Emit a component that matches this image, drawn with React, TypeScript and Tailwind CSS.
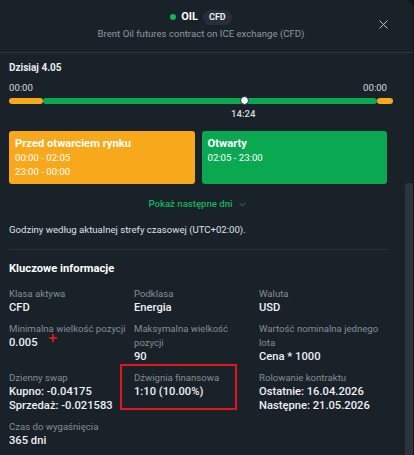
import { X, ChevronDown } from "lucide-react";

const info = [
  { label: "Klasa aktywa", value: ["CFD"] },
  { label: "Podklasa", value: ["Energia"] },
  { label: "Waluta", value: ["USD"] },
  { label: "Minimalna wielkość pozycji", value: ["0.005"], cursor: true },
  { label: "Maksymalna wielkość pozycji", value: ["90"] },
  { label: "Wartość nominalna jednego lota", value: ["Cena * 1000"] },
  { label: "Dzienny swap", value: ["Kupno: -0.04175", "Sprzedaż: -0.021583"] },
  { label: "Dźwignia finansowa", value: ["1:10 (10.00%)"], marked: true },
  { label: "Rolowanie kontraktu", value: ["Ostatnie: 16.04.2026", "Następne: 21.05.2026"] },
  { label: "Czas do wygaśnięcia", value: ["365 dni"] },
];

export default function App() {
  return (
    <div className="w-[414px] h-[455px] overflow-hidden bg-[#11161a] font-['Roboto',sans-serif] text-[#e8ebee]">
      <div className="w-[413px] h-full bg-[#1a2229] rounded-tr-[9px] flex flex-col">
        {/* header */}
        <header className="relative h-[53px] shrink-0 border-b border-[#2a333b] flex flex-col items-center pt-[9px] pr-[11px]">
          <div className="flex items-center h-[16px]">
            <span className="w-[6px] h-[6px] rounded-full bg-[#12b55c]" />
            <span className="ml-[5px] text-[11px] font-bold leading-[16px] text-white">OIL</span>
            <span className="ml-[5px] px-[6px] h-[15px] rounded-full bg-[#262f37] text-[9px] font-bold leading-[15px] text-[#e8ebee]">CFD</span>
          </div>
          <p className="mt-[2px] text-[9.6px] leading-[14px] text-[#8d97a1]">Brent Oil futures contract on ICE exchange (CFD)</p>
          <button className="absolute left-[376px] top-[17px] text-[#c9ced3]">
            <X size={15} strokeWidth={1.5} />
          </button>
        </header>

        <div className="flex flex-1 min-h-0">
          <main className="w-[405px] px-[9px] pt-[8px]">
            <h3 className="text-[10px] font-bold leading-[14px]">Dzisiaj 4.05</h3>

            {/* day timeline */}
            <div className="mt-[6px] flex justify-between w-[378px] text-[9.6px] leading-[14px] text-[#d5dade]">
              <span>00:00</span>
              <span>00:00</span>
            </div>
            <div className="relative mt-[3px] w-[384px] h-[6px] flex">
              <div className="w-[34px] h-full rounded-full bg-[#f8a91b]" />
              <div className="w-[334px] h-full rounded-[3px] bg-[#0ba852]" />
              <div className="w-[16px] h-full rounded-full bg-[#f8a91b]" />
              <span className="absolute left-[231px] top-[-2px] w-[9px] h-[9px] rounded-full bg-white border-[1.5px] border-[#1a2229]" />
            </div>
            <div className="relative mt-[3px] h-[14px]">
              <span className="absolute left-[222px] text-[9.6px] font-medium leading-[14px] text-[#d5dade]">14:24</span>
            </div>

            <div className="mt-[10px] grid grid-cols-2 gap-[7px] w-[378px]">
              <div className="h-[53px] rounded-[3px] bg-[#f8a91b] px-[6px] pt-[6px] text-white">
                <p className="text-[11.2px] font-bold leading-[14px]">Przed otwarciem rynku</p>
                <p className="text-[9.6px] leading-[14px]">00:00 - 02:05</p>
                <p className="text-[9.6px] leading-[14px]">23:00 - 00:00</p>
              </div>
              <div className="h-[53px] rounded-[3px] bg-[#0ba852] px-[6px] pt-[6px] text-white">
                <p className="text-[11.2px] font-bold leading-[14px]">Otwarty</p>
                <p className="text-[9.6px] leading-[14px]">02:05 - 23:00</p>
              </div>
            </div>

            <button className="mt-[12px] w-[378px] flex items-center justify-center gap-[4px] text-[9.6px] font-medium leading-[16px] text-[#17b05b]">
              Pokaż następne dni
              <ChevronDown size={11} strokeWidth={1.6} />
            </button>

            <p className="mt-[11px] text-[9.6px] leading-[14px] text-[#dde1e5]">
              Godziny według aktualnej strefy czasowej (UTC+02:00).
            </p>

            <div className="mt-[12px] w-[378px] h-px bg-[#2a333b]" />

            <h2 className="mt-[10px] text-[11.2px] font-bold leading-[18px] text-white">Kluczowe informacje</h2>

            <div className="mt-[9px] grid grid-cols-[125px_125px_125px] gap-y-[7px]">
              {info.map((item) => (
                <div key={item.label} className="relative pr-[4px]">
                  <p className="text-[9.6px] leading-[14px] text-[#838d97]">{item.label}</p>
                  {item.value.map((v) => (
                    <p key={v} className="text-[11.2px] font-medium leading-[14px] text-[#eef0f2]">{v}</p>
                  ))}
                  {item.cursor && (
                    <svg className="absolute left-[40px] top-[12px]" width="8" height="8" viewBox="0 0 8 8">
                      <path d="M4 0v8M0 4h8" stroke="#ff1a1a" strokeWidth="1.5" />
                    </svg>
                  )}
                  {item.marked && (
                    <span className="absolute left-[-14px] top-[-7px] w-[117px] h-[46px] border-2 border-[#e3141b]" />
                  )}
                </div>
              ))}
            </div>
          </main>

          {/* scrollbar */}
          <div className="w-[8px] flex flex-col">
            <div className="mt-[130px] flex-1 rounded-t-[3px] bg-[#2b343c]" />
          </div>
        </div>
      </div>
    </div>
  );
}
